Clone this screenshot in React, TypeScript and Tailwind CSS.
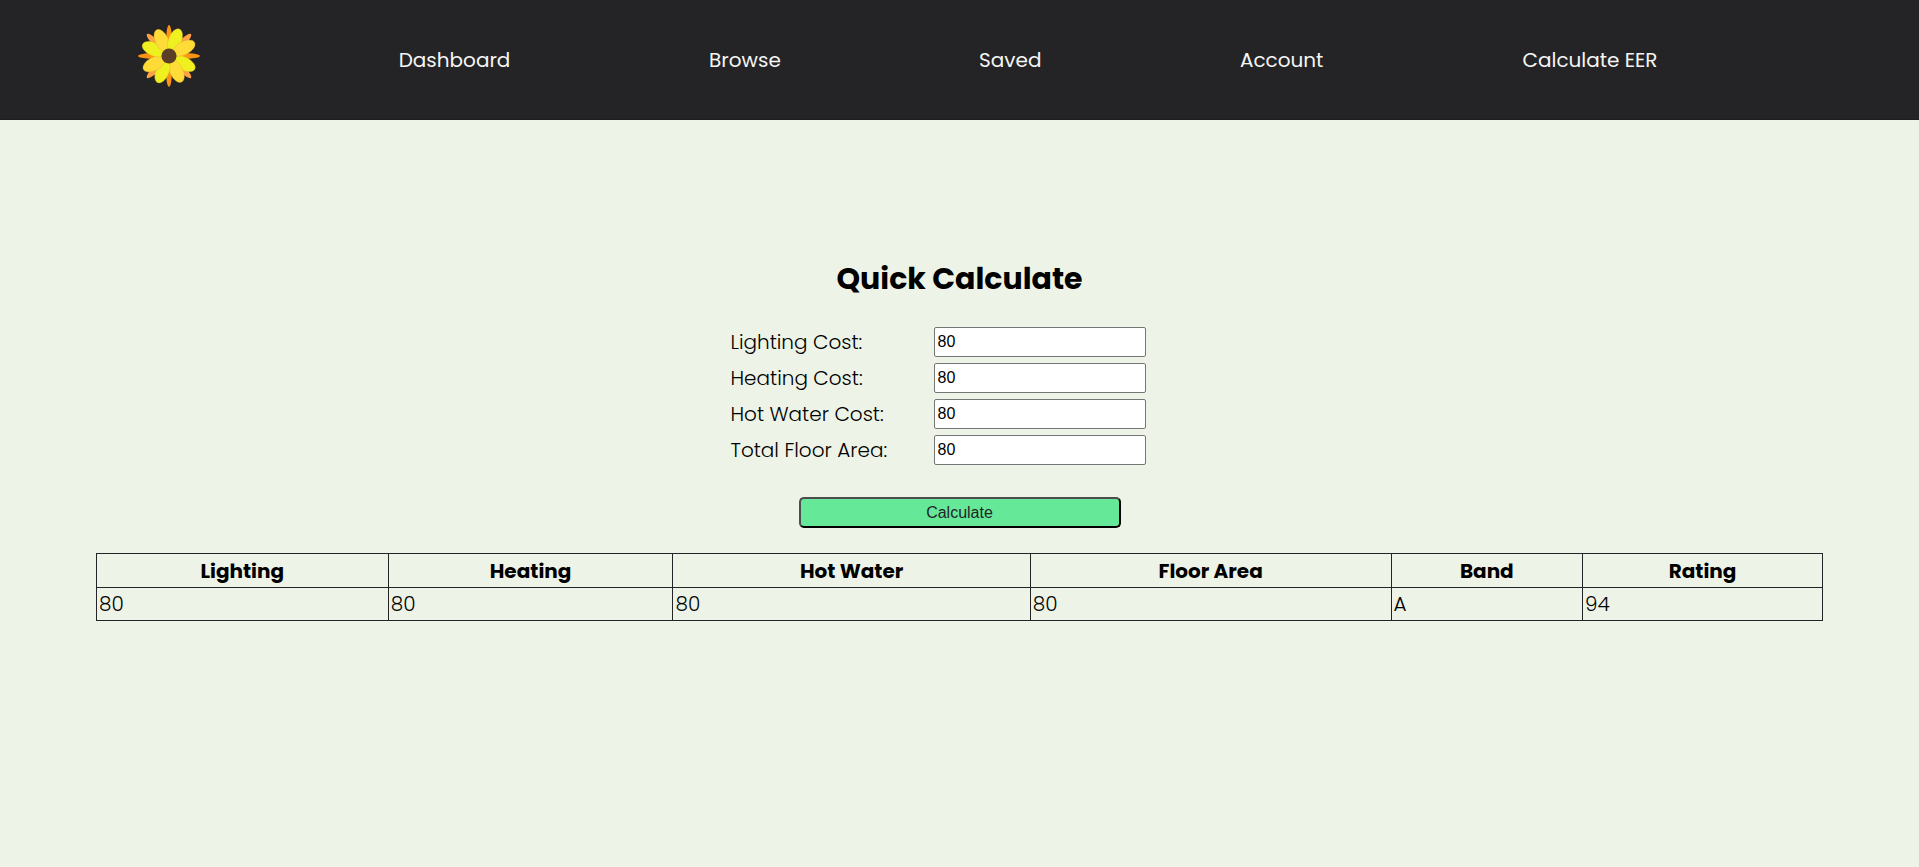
import { useState } from "react";

const navLinks = [
  { label: "Dashboard", width: "w-28" },
  { label: "Browse", width: "w-[72px]" },
  { label: "Saved", width: "w-[62px]" },
  { label: "Account", width: "w-[84px]" },
  { label: "Calculate EER", width: "w-[136px]" },
];

const fields = [
  { id: "lighting", label: "Lighting Cost:" },
  { id: "heating", label: "Heating Cost:" },
  { id: "hotWater", label: "Hot Water Cost:" },
  { id: "floorArea", label: "Total Floor Area:" },
];

const columns = [
  { label: "Lighting", width: "w-[16.9%]" },
  { label: "Heating", width: "w-[16.5%]" },
  { label: "Hot Water", width: "w-[20.7%]" },
  { label: "Floor Area", width: "w-[20.9%]" },
  { label: "Band", width: "w-[11.1%]" },
  { label: "Rating", width: "w-[13.9%]" },
];

const results = ["80", "80", "80", "80", "A", "94"];

const petals = [
  { angle: 27, fill: "#eef01f" },
  { angle: 64, fill: "#ffdb38" },
  { angle: 113, fill: "#eef01f" },
  { angle: 152, fill: "#ffdb38" },
  { angle: 204, fill: "#eef01f" },
  { angle: 245, fill: "#ffdb38" },
  { angle: 291, fill: "#eef01f" },
  { angle: 332, fill: "#ffdb38" },
];

function FlowerLogo() {
  return (
    <svg viewBox="-94 -94 188 188" className="size-[62px]" aria-hidden="true">
      {[45, 135, 225, 315].map((a) => (
        <ellipse key={a} cx="58" cy="0" rx="36" ry="10" fill="#ffa245" transform={`rotate(${a})`} />
      ))}
      {[0, 90, 180, 270].map((a) => (
        <ellipse key={a} cx="59" cy="0" rx="35" ry="8" fill="#ff9412" transform={`rotate(${a})`} />
      ))}
      {petals.map((p) => (
        <ellipse
          key={p.angle}
          cx="51"
          cy="0"
          rx="37"
          ry="20"
          fill={p.fill}
          stroke="#d8a72c"
          strokeWidth="1"
          transform={`rotate(${p.angle})`}
        />
      ))}
      <circle r="23" fill="#5b3e25" />
    </svg>
  );
}

export default function App() {
  const [values, setValues] = useState<Record<string, string>>({
    lighting: "80",
    heating: "80",
    hotWater: "80",
    floorArea: "80",
  });

  return (
    <div className="min-h-screen bg-[#edf3e7] font-[Poppins,Inter,sans-serif] text-xl text-black">
      <header className="border-b border-[#1f1b24] bg-[#242426]">
        <nav className="flex h-[119px] items-center justify-between pr-[13.6%] pl-[7.2%] text-[#f5f5f5]">
          <a href="#home" aria-label="Home" className="-mt-2">
            <FlowerLogo />
          </a>
          {navLinks.map((link) => (
            <a key={link.label} href="#" className={`flex justify-center whitespace-nowrap ${link.width}`}>
              {link.label}
            </a>
          ))}
        </nav>
      </header>

      <main className="flex flex-col items-center pt-[136px]">
        <h1 className="text-3xl leading-[45px] font-bold">Quick Calculate</h1>
        <form className="mt-[26px] flex flex-col items-center" onSubmit={(e) => e.preventDefault()}>
          <div className="flex w-[458px] flex-col gap-1.5">
            {fields.map((f) => (
              <div key={f.id} className="flex items-center">
                <label htmlFor={f.id} className="w-[203px] font-light">
                  {f.label}
                </label>
                <input
                  id={f.id}
                  value={values[f.id]}
                  onChange={(e) => setValues({ ...values, [f.id]: e.target.value })}
                  className="h-[30px] w-[212px] rounded-[2px] border border-[#767676] bg-white px-[3px] font-['Liberation_Sans',Arial,sans-serif] text-base"
                />
              </div>
            ))}
          </div>
          <button
            type="submit"
            className="mt-8 flex h-[31px] w-[322px] items-center justify-center rounded-[5px] border-2 border-t-[#4d4d4d] border-r-black border-b-black border-l-[#4d4d4d] bg-[#66e899] font-['Liberation_Sans',Arial,sans-serif] text-base text-[#242426]"
          >
            Calculate
          </button>
        </form>

        <table className="mt-[25px] w-9/10 table-fixed border-collapse">
          <thead>
            <tr className="h-[34px]">
              {columns.map((c) => (
                <th key={c.label} className={`border border-[#242426] p-px font-bold ${c.width}`}>
                  {c.label}
                </th>
              ))}
            </tr>
          </thead>
          <tbody>
            <tr className="h-[33px]">
              {results.map((r, i) => (
                <td key={i} className="border border-[#242426] px-0.5 py-px font-light">
                  {r}
                </td>
              ))}
            </tr>
          </tbody>
        </table>
      </main>
    </div>
  );
}
